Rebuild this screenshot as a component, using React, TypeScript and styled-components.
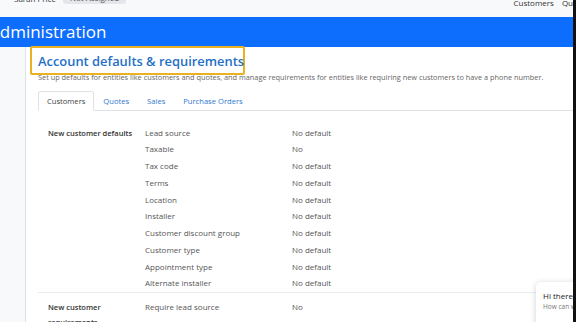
import React from "react";
import styled, { createGlobalStyle } from "styled-components";

const GlobalStyle = createGlobalStyle`
  html, body {
    margin: 0;
    padding: 0;
    background: #f8f9fa;
  }
  body {
    font-family: "Open Sans", "Noto Sans", sans-serif;
  }
`;

const Frame = styled.div`
  display: flex;
  width: 576px;
  height: 322px;
  overflow: hidden;
`;

const Main = styled.div`
  position: relative;
  flex: 1;
  min-width: 0;
  display: flex;
  flex-direction: column;
  overflow: hidden;
`;

const EdgeStripe = styled.div`
  width: 3px;
  flex-shrink: 0;
  background: #111;
`;

const TopBar = styled.header`
  height: 17px;
  flex-shrink: 0;
  display: flex;
  justify-content: space-between;
  background: #f8f9fa;
  font-size: 8px;
  color: #333;
  overflow: hidden;
`;

const UserInfo = styled.div`
  display: flex;
  align-items: center;
  gap: 7px;
  margin: -8px 0 0 14px;
  height: 12px;
`;

const Badge = styled.span`
  background: #e4e6e9;
  border-radius: 3px;
  padding: 0 7px;
  color: #555;
  line-height: 12px;
`;

const TopNav = styled.nav`
  display: flex;
  gap: 8px;
  margin-top: -2px;
  margin-right: -16px;
  height: 10px;
  line-height: 10px;
`;

const TitleBand = styled.div`
  height: 30px;
  flex-shrink: 0;
  background: #0d6efd;
  color: #fff;
  font-size: 17px;
  line-height: 30px;
  overflow: hidden;
  white-space: nowrap;
`;

const TitleText = styled.span`
  margin-left: -11px;
`;

const Body = styled.div`
  flex: 1;
  display: flex;
  min-height: 0;
`;

const Gutter = styled.div`
  width: 25px;
  flex-shrink: 0;
  background: #f8f9fa;
`;

const Panel = styled.section`
  flex: 1;
  background: #fff;
  border-left: 1px solid #dee2e6;
  padding-left: 12px;
  min-width: 0;
`;

const HighlightBox = styled.div`
  width: 215px;
  height: 29px;
  box-sizing: border-box;
  margin: -1px 0 0 -8px;
  border: 2px solid #e8b223;
  border-radius: 2px;
  padding-left: 6px;
  display: flex;
  align-items: center;
  white-space: nowrap;
`;

const Heading = styled.h1`
  margin: 0;
  font-size: 12.9px;
  font-weight: 600;
  color: #1f6fc8;
`;

const Subtitle = styled.p`
  margin: -3px 0 0;
  font-size: 7.35px;
  line-height: 11px;
  color: #666;
  white-space: nowrap;
`;

const Tabs = styled.nav`
  display: flex;
  margin-top: 8px;
  height: 19px;
  border-bottom: 1px solid #dee2e6;
  font-size: 7.6px;
`;

const Tab = styled.span<{ $active?: boolean }>`
  padding: 0 8px;
  line-height: 19px;
  border: 1px solid ${(p) => (p.$active ? "#dee2e6" : "transparent")};
  border-bottom-color: ${(p) => (p.$active ? "#fff" : "transparent")};
  border-radius: 3px 3px 0 0;
  background: ${(p) => (p.$active ? "#fff" : "transparent")};
  color: ${(p) => (p.$active ? "#444" : "#2f79cf")};
  margin-bottom: -1px;
`;

const Section = styled.div<{ $divider?: boolean }>`
  display: grid;
  grid-template-columns: 97px 147px 1fr;
  padding: ${(p) => (p.$divider ? "13.6px 0 0 10px" : "6px 0 0 10px")};
  border-bottom: ${(p) => (p.$divider ? "1px solid #e9ecef" : "none")};
  font-size: 8px;
`;

const SectionLabel = styled.div<{ $rows: number }>`
  grid-row: 1 / span ${(p) => p.$rows};
  font-size: 7.5px;
  font-weight: 600;
  color: #333;
  line-height: 15px;
  padding-top: 1px;
`;

const Field = styled.div`
  grid-column: 2;
  line-height: 16.75px;
  color: #555;
`;

const Value = styled.div`
  grid-column: 3;
  line-height: 16.75px;
  color: #555;
`;

const ChatBubble = styled.div`
  position: absolute;
  right: -12px;
  bottom: -12px;
  width: 42px;
  height: 44px;
  padding: 8px 0 0 7px;
  background: #fff;
  border-radius: 5px;
  box-shadow: 0 1px 6px rgba(0, 0, 0, 0.18);
  white-space: nowrap;
  overflow: hidden;
`;

const ChatTitle = styled.div`
  font-size: 8px;
  color: #222;
  line-height: 12px;
`;

const ChatText = styled.div`
  font-size: 6.5px;
  color: #777;
  line-height: 10px;
`;

type Row = { field: string; value: string };

const defaults: Row[] = [
  { field: "Lead source", value: "No default" },
  { field: "Taxable", value: "No" },
  { field: "Tax code", value: "No default" },
  { field: "Terms", value: "No default" },
  { field: "Location", value: "No default" },
  { field: "Installer", value: "No default" },
  { field: "Customer discount group", value: "No default" },
  { field: "Customer type", value: "No default" },
  { field: "Appointment type", value: "No default" },
  { field: "Alternate installer", value: "No default" },
];

const requirements: Row[] = [
  { field: "Require lead source", value: "No" },
  { field: "Require tax code", value: "No" },
  { field: "Require phone number", value: "No" },
];

const tabs = ["Customers", "Quotes", "Sales", "Purchase Orders"];

function SettingsSection({ label, rows, divider }: { label: string; rows: Row[]; divider?: boolean }) {
  return (
    <Section $divider={divider}>
      <SectionLabel $rows={rows.length}>{label}</SectionLabel>
      {rows.map((r) => (
        <React.Fragment key={r.field}>
          <Field>{r.field}</Field>
          <Value>{r.value}</Value>
        </React.Fragment>
      ))}
    </Section>
  );
}

export default function App() {
  return (
    <>
      <GlobalStyle />
      <Frame>
        <Main>
          <TopBar>
            <UserInfo>
              <span>Sarah Price</span>
              <Badge>Not Assigned</Badge>
            </UserInfo>
            <TopNav>
              <span>Customers</span>
              <span>Quotes</span>
            </TopNav>
          </TopBar>
          <TitleBand>
            <TitleText>Administration</TitleText>
          </TitleBand>
          <Body>
            <Gutter />
            <Panel>
              <HighlightBox>
                <Heading>Account defaults &amp; requirements</Heading>
              </HighlightBox>
              <Subtitle>
                Set up defaults for entities like customers and quotes, and manage requirements for entities like
                requiring new customers to have a phone number.
              </Subtitle>
              <Tabs>
                {tabs.map((t, i) => (
                  <Tab key={t} $active={i === 0}>
                    {t}
                  </Tab>
                ))}
              </Tabs>
              <SettingsSection label="New customer defaults" rows={defaults} divider />
              <SettingsSection label="New customer requirements" rows={requirements} />
            </Panel>
          </Body>
          <ChatBubble>
            <ChatTitle>Hi there!</ChatTitle>
            <ChatText>How can we help?</ChatText>
          </ChatBubble>
        </Main>
        <EdgeStripe />
      </Frame>
    </>
  );
}
